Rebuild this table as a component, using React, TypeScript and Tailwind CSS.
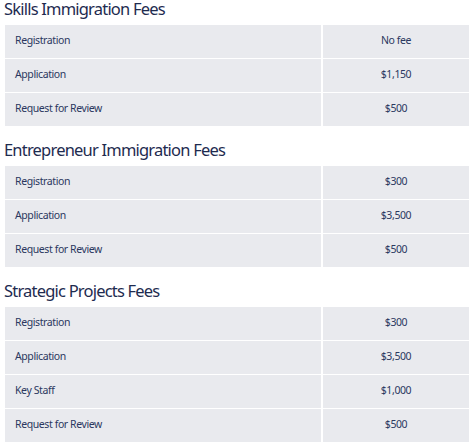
const sections = [
  {
    title: "Skills Immigration Fees",
    rows: [
      ["Registration", "No fee"],
      ["Application", "$1,150"],
      ["Request for Review", "$500"],
    ],
  },
  {
    title: "Entrepreneur Immigration Fees",
    rows: [
      ["Registration", "$300"],
      ["Application", "$3,500"],
      ["Request for Review", "$500"],
    ],
  },
  {
    title: "Strategic Projects Fees",
    rows: [
      ["Registration", "$300"],
      ["Application", "$3,500"],
      ["Key Staff", "$1,000"],
      ["Request for Review", "$500"],
    ],
  },
];

const FeeTable = ({ rows }: { rows: string[][] }) => (
  <div className="grid grid-cols-[316px_1fr] gap-x-[2px] gap-y-[1.5px]">
    {rows.map(([label, fee]) => (
      <div key={label} className="contents">
        <div className="flex h-[32.5px] items-center bg-[#e9eaee] pl-[10px] text-[10.5px] tracking-[-0.4px] text-[#2b3860]">{label}</div>
        <div className="flex h-[32.5px] items-center justify-center bg-[#e9eaee] text-[10.5px] tracking-[-0.4px] text-[#2b3860]">{fee}</div>
      </div>
    ))}
  </div>
);

export default function App() {
  return (
    <div className="h-[447px] w-[474px] overflow-hidden bg-white px-[5px] font-['Noto_Sans',sans-serif]">
      {sections.map((s, i) => (
        <section key={s.title} className={i === 0 ? "-mt-[3px]" : "mt-[12.5px]"}>
          <h2 className="-ml-[1px] mb-[5px] text-[16.5px] leading-[23px] tracking-[-0.8px] text-[#1e2b4f]">{s.title}</h2>
          <FeeTable rows={s.rows} />
        </section>
      ))}
    </div>
  );
}
